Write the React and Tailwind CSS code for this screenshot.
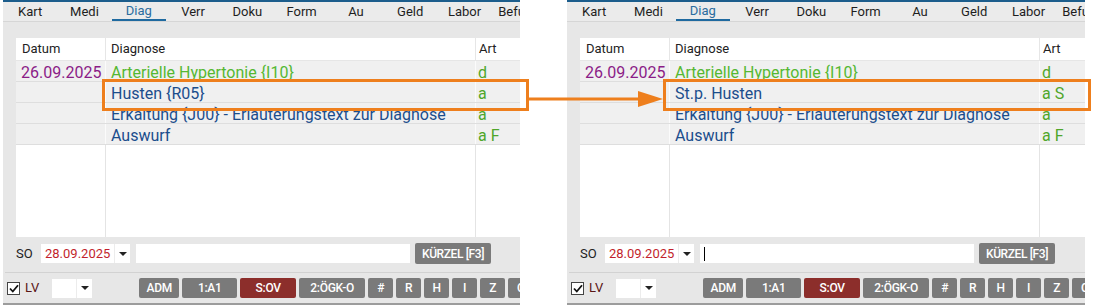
const TABS = ['Kart', 'Medi', 'Diag', 'Verr', 'Doku', 'Form', 'Au', 'Geld', 'Labor', 'Befund'];

const SMALL_BUTTONS = ['#', 'R', 'H', 'I', 'Z', 'C'];

function Caret() {
  return (
    <svg width="10" height="6" viewBox="0 0 10 6">
      <polygon points="1,1 9,1 5,5" fill="#222" />
    </svg>
  );
}

function Row({ date, diag, diagColor, art }) {
  return (
    <div className="grid grid-cols-[90px_370px_1fr] h-[21px] bg-[#f0f0f0] border-b border-[#dedede] text-[16px] leading-none">
      <div className="flex items-center pt-[4px] pl-[5px] border-r border-[#fbfbfb] text-[#8b1c87]">{date}</div>
      <div className={`flex items-center pt-[4px] pl-[5px] border-r border-[#fbfbfb] whitespace-nowrap ${diagColor}`}>{diag}</div>
      <div className="flex items-center pt-[4px] pl-[2px] text-[#4fa62a] whitespace-nowrap">{art}</div>
    </div>
  );
}

function Button({ label, width, red }) {
  return (
    <div
      className={`flex shrink-0 items-center justify-center h-[20px] rounded-[2px] ${width} ${
        red ? 'bg-[#8c2e2b]' : 'bg-[#7a7a7a]'
      }`}
    >
      {label}
    </div>
  );
}

function Panel({ after }) {
  return (
    <div className={`flex flex-col shrink-0 h-[305px] bg-[#e7e7e7] overflow-hidden ${after ? 'w-[518px]' : 'w-[517px]'}`}>
      {/* top line + tabs */}
      <div className="h-[2px] bg-[#1c5d8c]" />
      <div className="flex h-[20px] bg-[#ebebeb] border-b border-[#d6d6d6] whitespace-nowrap">
        {TABS.map((t) => (
          <div
            key={t}
            className={`w-[54.3px] shrink-0 flex items-center justify-center text-[13px] ${
              t === 'Diag' ? 'text-[#2a6c9e] border-b-2 border-[#1f6aa0]' : 'text-[#1e1e1e]'
            }`}
          >
            {t}
          </div>
        ))}
      </div>

      {/* table */}
      <div className="ml-[13px] mt-[16px] flex flex-col">
        <div className="grid grid-cols-[90px_370px_1fr] h-[23px] bg-white border-b border-[#e6e6e6] text-[13px] text-[#222]">
          <div className="flex items-center pl-[6px] border-r border-[#e6e6e6]">Datum</div>
          <div className="flex items-center pl-[5px] border-r border-[#e6e6e6]">Diagnose</div>
          <div className="flex items-center pl-[3px]">Art</div>
        </div>
        <Row date="26.09.2025" diag="Arterielle Hypertonie {I10}" diagColor="text-[#55b832]" art="d" />
        <Row date="" diag={after ? 'St.p. Husten' : 'Husten {R05}'} diagColor="text-[#1b4d8c]" art={after ? 'a S' : 'a'} />
        <Row date="" diag="Erkältung {J00} - Erläuterungstext zur Diagnose" diagColor="text-[#1b4d8c]" art="a" />
        <Row date="" diag="Auswurf" diagColor="text-[#1b4d8c]" art="a F" />
        <div className="grid grid-cols-[90px_370px_1fr] h-[92px] bg-white">
          <div className="border-r border-[#e4e4e4]" />
          <div className="border-r border-[#e4e4e4]" />
          <div />
        </div>
      </div>

      {/* SO row */}
      <div className="flex items-center h-[21px] mt-[6px] pl-[13px] whitespace-nowrap">
        <span className="shrink-0 w-[25px] text-[13px] text-[#222]">SO</span>
        <div className="flex shrink-0 h-[19px] w-[89px] bg-white">
          <div className="flex items-center w-[74px] pl-[4px] text-[13px] text-[#c21f2c] border-r border-[#ececec]">28.09.2025</div>
          <div className="flex flex-1 items-center justify-center"><Caret /></div>
        </div>
        <div className="flex shrink-0 items-center h-[19px] w-[274px] ml-[6px] bg-white pl-[4px]">
          {after && <div className="w-px h-[14px] bg-black" />}
        </div>
        <div className="flex shrink-0 items-center justify-center h-[21px] w-[76px] ml-[5px] rounded-[2px] bg-[#7a7a7a] text-white text-[12px] font-medium tracking-[-0.4px]">
          KÜRZEL [F3]
        </div>
      </div>

      <div className="h-px mt-[8px] ml-[2px] bg-[#d2d2d2]" />

      {/* bottom row */}
      <div className="flex items-center h-[20px] mt-[5px] whitespace-nowrap">
        <div className="shrink-0 ml-[4px] w-[13px] h-[13px] bg-white border border-[#444] flex items-center justify-center">
          <svg width="10" height="9" viewBox="0 0 10 9">
            <path d="M1 4.5 L3.8 7.5 L9 1.2" fill="none" stroke="#111" strokeWidth="1.8" />
          </svg>
        </div>
        <span className="shrink-0 ml-[5px] text-[13px] text-[#5a1515]">LV</span>
        <div className="flex shrink-0 ml-[13px] h-[19px] w-[40px] bg-white">
          <div className="w-[25px] border-r border-[#ececec]" />
          <div className="flex flex-1 items-center justify-center"><Caret /></div>
        </div>
        <div className="flex shrink-0 ml-[47px] gap-[3px] text-white text-[12px] font-medium tracking-[-0.3px]">
          <Button label="ADM" width="w-[40px]" />
          <Button label="1:A1" width="w-[55px]" />
          <Button label="S:OV" width="w-[56px]" red />
          <Button label="2:ÖGK-O" width="w-[66px]" />
          {SMALL_BUTTONS.map((b) => (
            <Button key={b} label={b} width="w-[25px]" />
          ))}
        </div>
      </div>

      <div className="h-[2px] mt-[5px] bg-[#9c9c9c]" />
    </div>
  );
}

export default function App() {
  return (
    <div className="relative flex w-[1094px] h-[305px] pl-[3px] gap-[47px] bg-white overflow-hidden font-['Roboto',sans-serif]">
      <Panel />
      <Panel after />

      {/* highlight boxes + arrow */}
      <div className="absolute left-[102px] top-[79px] w-[427px] h-[32px] border-[3px] border-[#ee7f1d]" />
      <div className="absolute left-[663px] top-[79px] w-[428px] h-[32px] border-[3px] border-[#ee7f1d]" />
      <svg className="absolute left-[529px] top-[89px]" width="136" height="20" viewBox="0 0 136 20">
        <rect x="0" y="8.5" width="112" height="3" fill="#ee7f1d" />
        <polygon points="109,2 134,10 109,18" fill="#ee7f1d" />
      </svg>
    </div>
  );
}
